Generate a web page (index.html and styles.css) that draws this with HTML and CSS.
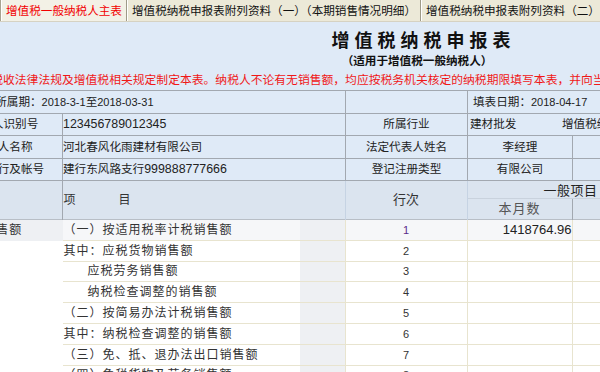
FILE: index.html
```html
<!DOCTYPE html>
<html lang="zh-CN">
<head>
<meta charset="utf-8">
<title>增值税纳税申报表</title>
<link rel="stylesheet" href="styles.css">
</head>
<body>
<div class="tabs">
  <div class="tab-edge"></div>
  <div class="tab active">增值税一般纳税人主表</div>
  <div class="tab">增值税纳税申报表附列资料（一）（本期销售情况明细）</div>
  <div class="tab">增值税纳税申报表附列资料（二）（本期进项税额明细）</div>
</div>
<div class="page">
  <div class="sheet">
    <div class="title">增值税纳税申报表</div>
    <div class="subtitle">（适用于增值税一般纳税人）</div>
    <div class="notice">根据国家税收法律法规及增值税相关规定制定本表。纳税人不论有无销售额，均应按税务机关核定的纳税期限填写本表，并向当地税务机关申报。</div>
    <table class="info">
      <colgroup>
        <col class="c1"><col class="c2"><col class="c3"><col class="c4"><col class="c5"><col class="c6">
      </colgroup>
      <tr>
        <td colspan="2" class="left period">税款所属期：<span class="d">2018-3-1</span>至<span class="d">2018-03-31</span></td>
        <td></td>
        <td colspan="3" class="left pad">填表日期：<span class="d">2018-04-17</span></td>
      </tr>
      <tr>
        <td class="label">纳税人识别号</td>
        <td class="left"><span class="id">123456789012345</span></td>
        <td class="label">所属行业</td>
        <td colspan="3" class="left industry"><span class="ind-a">建材批发</span><span>增值税纳税人类型</span></td>
      </tr>
      <tr>
        <td class="label">纳税人名称</td>
        <td class="left">河北春风化雨建材有限公司</td>
        <td class="label">法定代表人姓名</td>
        <td class="center">李经理</td>
        <td colspan="2"></td>
      </tr>
      <tr>
        <td class="label">开户银行及帐号</td>
        <td class="left">建行东风路支行<span class="id">999888777666</span></td>
        <td class="label">登记注册类型</td>
        <td class="center">有限公司</td>
        <td colspan="2"></td>
      </tr>
    </table>
    <table class="main">
      <colgroup>
        <col class="c1"><col class="c2a"><col class="c2b"><col class="c3"><col class="c4"><col class="c5"><col class="c6m">
      </colgroup>
      <thead>
        <tr class="h1">
          <th rowspan="2"></th>
          <th rowspan="2" colspan="2" class="item-h">项<span class="gap"></span>目</th>
          <th rowspan="2" class="no-h">行次</th>
          <th colspan="2" class="group">一般项目</th>
          <th rowspan="2"></th>
        </tr>
        <tr class="h2">
          <th class="sub">本月数</th>
          <th class="sub"></th>
        </tr>
      </thead>
      <tbody>
        <tr class="first">
          <td class="cat">销售额</td>
          <td class="item">（一）按适用税率计税销售额</td><td class="g"></td>
          <td class="no">1</td><td class="num">1418764.96</td><td></td><td></td>
        </tr>
        <tr>
          <td class="blank"></td>
          <td class="item">其中：应税货物销售额</td><td class="g"></td>
          <td class="no">2</td><td></td><td></td><td></td>
        </tr>
        <tr>
          <td class="blank"></td>
          <td class="item ind">应税劳务销售额</td><td class="g"></td>
          <td class="no">3</td><td></td><td></td><td></td>
        </tr>
        <tr>
          <td class="blank"></td>
          <td class="item ind">纳税检查调整的销售额</td><td class="g"></td>
          <td class="no">4</td><td></td><td></td><td></td>
        </tr>
        <tr>
          <td class="blank"></td>
          <td class="item">（二）按简易办法计税销售额</td><td class="g"></td>
          <td class="no">5</td><td></td><td></td><td></td>
        </tr>
        <tr>
          <td class="blank"></td>
          <td class="item">其中：纳税检查调整的销售额</td><td class="g"></td>
          <td class="no">6</td><td></td><td></td><td></td>
        </tr>
        <tr>
          <td class="blank"></td>
          <td class="item">（三）免、抵、退办法出口销售额</td><td class="g"></td>
          <td class="no">7</td><td></td><td></td><td></td>
        </tr>
        <tr>
          <td class="blank"></td>
          <td class="item">（四）免税货物及劳务销售额</td><td class="g"></td>
          <td class="no">8</td><td></td><td></td><td></td>
        </tr>
      </tbody>
    </table>
  </div>
</div>
</body>
</html>
```

FILE: styles.css
```css
html, body {
  margin: 0;
  padding: 0;
  overflow: hidden;
  background: #dfeaf7;
  font-family: "Liberation Sans", "Noto Sans CJK SC", sans-serif;
  color: #222;
}

.tabs {
  display: flex;
  height: 22px;
  background: #ece9d8;
  white-space: nowrap;
  overflow: hidden;
  border-bottom: 1px solid #d6d2c2;
  box-sizing: border-box;
}

.tab-edge {
  width: 3px;
  border-right: 1px solid #a7a390;
}

.tab {
  font-size: 11.6px;
  line-height: 21px;
  padding: 0 4px 0 5px;
  color: #111;
  border-right: 1px solid #9e9a88;
  box-shadow: inset 1px 0 0 #ffffff;
  flex: none;
}

.tab.active {
  color: #f20000;
  background: #f3f1e6;
}

.page {
  overflow: hidden;
}

.sheet {
  width: 954px;
  margin-left: -56px;
}

.title {
  text-align: center;
  font-size: 18px;
  font-weight: bold;
  letter-spacing: 5px;
  text-indent: 5px;
  line-height: 22px;
  margin-top: 8px;
  color: #111;
}

.subtitle {
  text-align: center;
  font-size: 11.6px;
  font-weight: bold;
  line-height: 17px;
  color: #111;
  padding-right: 8px;
}

.notice {
  font-size: 11.8px;
  line-height: 16px;
  color: #f01818;
  white-space: nowrap;
  margin-top: 3px;
}

table {
  border-collapse: collapse;
  table-layout: fixed;
  width: 954px;
}

col.c1 { width: 118px; }
col.c2 { width: 283px; }
col.c2a { width: 238px; }
col.c2b { width: 45px; }
col.c3 { width: 122px; }
col.c4 { width: 105px; }
col.c5 { width: 102px; }
col.c6, col.c6m { width: 224px; }

.info {
  margin-top: 2px;
}

.info td {
  border: 1px solid #a2a8b0;
  height: 21.5px;
  padding: 0 2px;
  font-size: 11.6px;
  line-height: 14px;
  white-space: nowrap;
  overflow: hidden;
  color: #222;
}

.info .d {
  font-size: 11px;
}

.info .id {
  font-size: 12.4px;
}

.info td.label {
  text-align: center;
}

.info td.left {
  text-align: left;
  padding-left: 0;
}

.info td.period {
  padding-left: 27px;
}

.info td.pad {
  padding-left: 5px;
}

.info td.center {
  text-align: center;
}

.info td.industry {
  padding-left: 2px;
}

.ind-a {
  display: inline-block;
  width: 92px;
}

.main th {
  background: #dbe4ef;
  font-weight: normal;
  font-size: 12px;
  line-height: 14px;
  color: #333;
  padding: 0;
  vertical-align: middle;
  border-left: 1px solid #c6d3e3;
  border-right: 1px solid #c6d3e3;
}

.main th:first-child {
  border-left: none;
  border-right: 1px solid #a2a8b0;
}

.main tr.h1 th {
  height: 17px;
}

.main tr.h2 th {
  height: 20px;
}

.main th.item-h {
  text-align: left;
  padding-left: 1px;
  border-left: 1px solid #a2a8b0;
}

.gap {
  display: inline-block;
  width: 43px;
}

.main th.no-h {
  text-align: center;
  font-size: 13px;
}

.main th.group {
  text-align: center;
  font-size: 13px;
  letter-spacing: 0.5px;
  vertical-align: bottom;
  border-bottom: 1px solid #c9d2dd;
  color: #222;
}

.main th.sub {
  font-size: 13px;
  letter-spacing: 1px;
  text-align: center;
  color: #555;
}

.main td {
  height: 19.8px;
  padding: 0;
  border: 1px solid #e8e4cf;
  background: #ffffff;
  font-size: 12px;
  line-height: 14px;
  vertical-align: middle;
  white-space: nowrap;
  overflow: hidden;
}

.main tbody tr:first-child td {
  border-top: 1px solid #b8bec6;
}

.main tbody tr.first td {
  background: #f6f7f9;
}

.main td.cat {
  text-align: center;
  letter-spacing: 1px;
  color: #333;
  border-left: none;
  border-color: #eef0f3;
}

.main tbody tr.first td.cat {
  background: #eef0f3;
}

.main td.blank {
  border-color: #ffffff;
  border-left: none;
}

.main td.item {
  padding-left: 1px;
  letter-spacing: 1px;
  color: #333;
  border-right: none;
}

.main td.item.ind {
  padding-left: 25px;
}

.main td.g,
.main tbody tr.first td.g {
  background: #eef0f3;
  border-left: none;
}

.main td.no {
  text-align: center;
  font-size: 11px;
  line-height: 12px;
  color: #333;
  padding-bottom: 0;
}

.main tr.first td.no {
  color: #5a2a8a;
}

.main td.num {
  text-align: right;
  font-size: 13px;
  color: #222;
  padding-right: 0;
  overflow: visible;
}
```
